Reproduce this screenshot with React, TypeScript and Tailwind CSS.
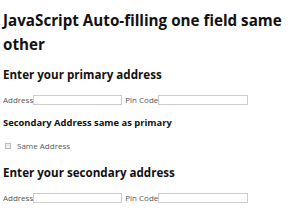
export default function App() {
  return (
    <div className="h-[210px] w-[300px] overflow-hidden bg-white px-[3px] pt-[8px] text-[#222] [font-family:'Open_Sans',sans-serif]">
      <h1 className="text-[15.2px] font-bold leading-[24px] text-[#111]">
        JavaScript Auto-filling one field same other
      </h1>
      <h2 className="mt-[10px] text-[11.6px] font-bold leading-[18px] text-[#111]">
        Enter your primary address
      </h2>
      <div className="mt-[10px] flex items-center text-[8px] leading-[12px] text-[#555]">
        <span>Address</span>
        <input className="h-[10px] w-[89px] border border-[#ccc] bg-white" />
        <span className="ml-[3px]">Pin Code</span>
        <input className="h-[10px] w-[90px] border border-[#ccc] bg-white" />
      </div>
      <p className="mt-[11px] text-[9.4px] font-bold leading-[12px] text-[#111]">
        Secondary Address same as primary
      </p>
      <label className="mt-[11px] flex items-center gap-[6px] pl-[2px] text-[8px] leading-[12px] text-[#555]">
        <span className="h-[6px] w-[6px] border border-[#bbb] bg-[#eee]" />
        Same Address
      </label>
      <h2 className="mt-[12px] text-[11.6px] font-bold leading-[18px] text-[#111]">
        Enter your secondary address
      </h2>
      <div className="mt-[10px] flex items-center text-[8px] leading-[12px] text-[#555]">
        <span>Address</span>
        <input className="h-[10px] w-[89px] border border-[#ccc] bg-white" />
        <span className="ml-[3px]">Pin Code</span>
        <input className="h-[10px] w-[90px] border border-[#ccc] bg-white" />
      </div>
    </div>
  );
}
